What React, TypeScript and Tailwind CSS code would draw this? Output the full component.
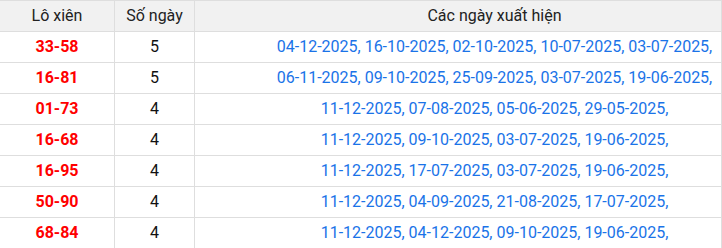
import React from 'react';

type Row = { pair: string; count: number; dates: string[] };

const rows: Row[] = [
  { pair: '33-58', count: 5, dates: ['04-12-2025', '16-10-2025', '02-10-2025', '10-07-2025', '03-07-2025'] },
  { pair: '16-81', count: 5, dates: ['06-11-2025', '09-10-2025', '25-09-2025', '03-07-2025', '19-06-2025'] },
  { pair: '01-73', count: 4, dates: ['11-12-2025', '07-08-2025', '05-06-2025', '29-05-2025'] },
  { pair: '16-68', count: 4, dates: ['11-12-2025', '09-10-2025', '03-07-2025', '19-06-2025'] },
  { pair: '16-95', count: 4, dates: ['11-12-2025', '17-07-2025', '03-07-2025', '19-06-2025'] },
  { pair: '50-90', count: 4, dates: ['11-12-2025', '04-09-2025', '21-08-2025', '17-07-2025'] },
  { pair: '68-84', count: 4, dates: ['11-12-2025', '04-12-2025', '09-10-2025', '19-06-2025'] },
];

const App: React.FC = () => {
  return (
    <div className="w-[722px] h-[248px] overflow-hidden bg-white border-r border-[#dedede] font-['Roboto','Liberation_Sans',sans-serif] text-[16px]">
      <div className="w-[794px]">
        <div className="grid grid-cols-[115px_80px_599px] h-[32px] bg-[#f1f1f1] border-y border-[#dedede] text-[#222]">
          <div className="flex items-center justify-center border-r border-[#dedede]">Lô xiên</div>
          <div className="flex items-center justify-center border-r border-[#dedede]">Số ngày</div>
          <div className="flex items-center justify-center">Các ngày xuất hiện</div>
        </div>
        {rows.map(row => (
          <div key={row.pair} className="grid grid-cols-[115px_80px_599px] h-[31px] border-b border-[#dedede]">
            <div className="flex items-center justify-center border-r border-[#dedede] font-bold text-[#ff0000]">{row.pair}</div>
            <div className="flex items-center justify-center border-r border-[#dedede] text-[#111]">{row.count}</div>
            <div className="flex items-center justify-center text-[#1a73e8] whitespace-nowrap">
              {row.dates.map(d => d + ', ').join('').trimEnd()}
            </div>
          </div>
        ))}
      </div>
    </div>
  );
};

export default App;
